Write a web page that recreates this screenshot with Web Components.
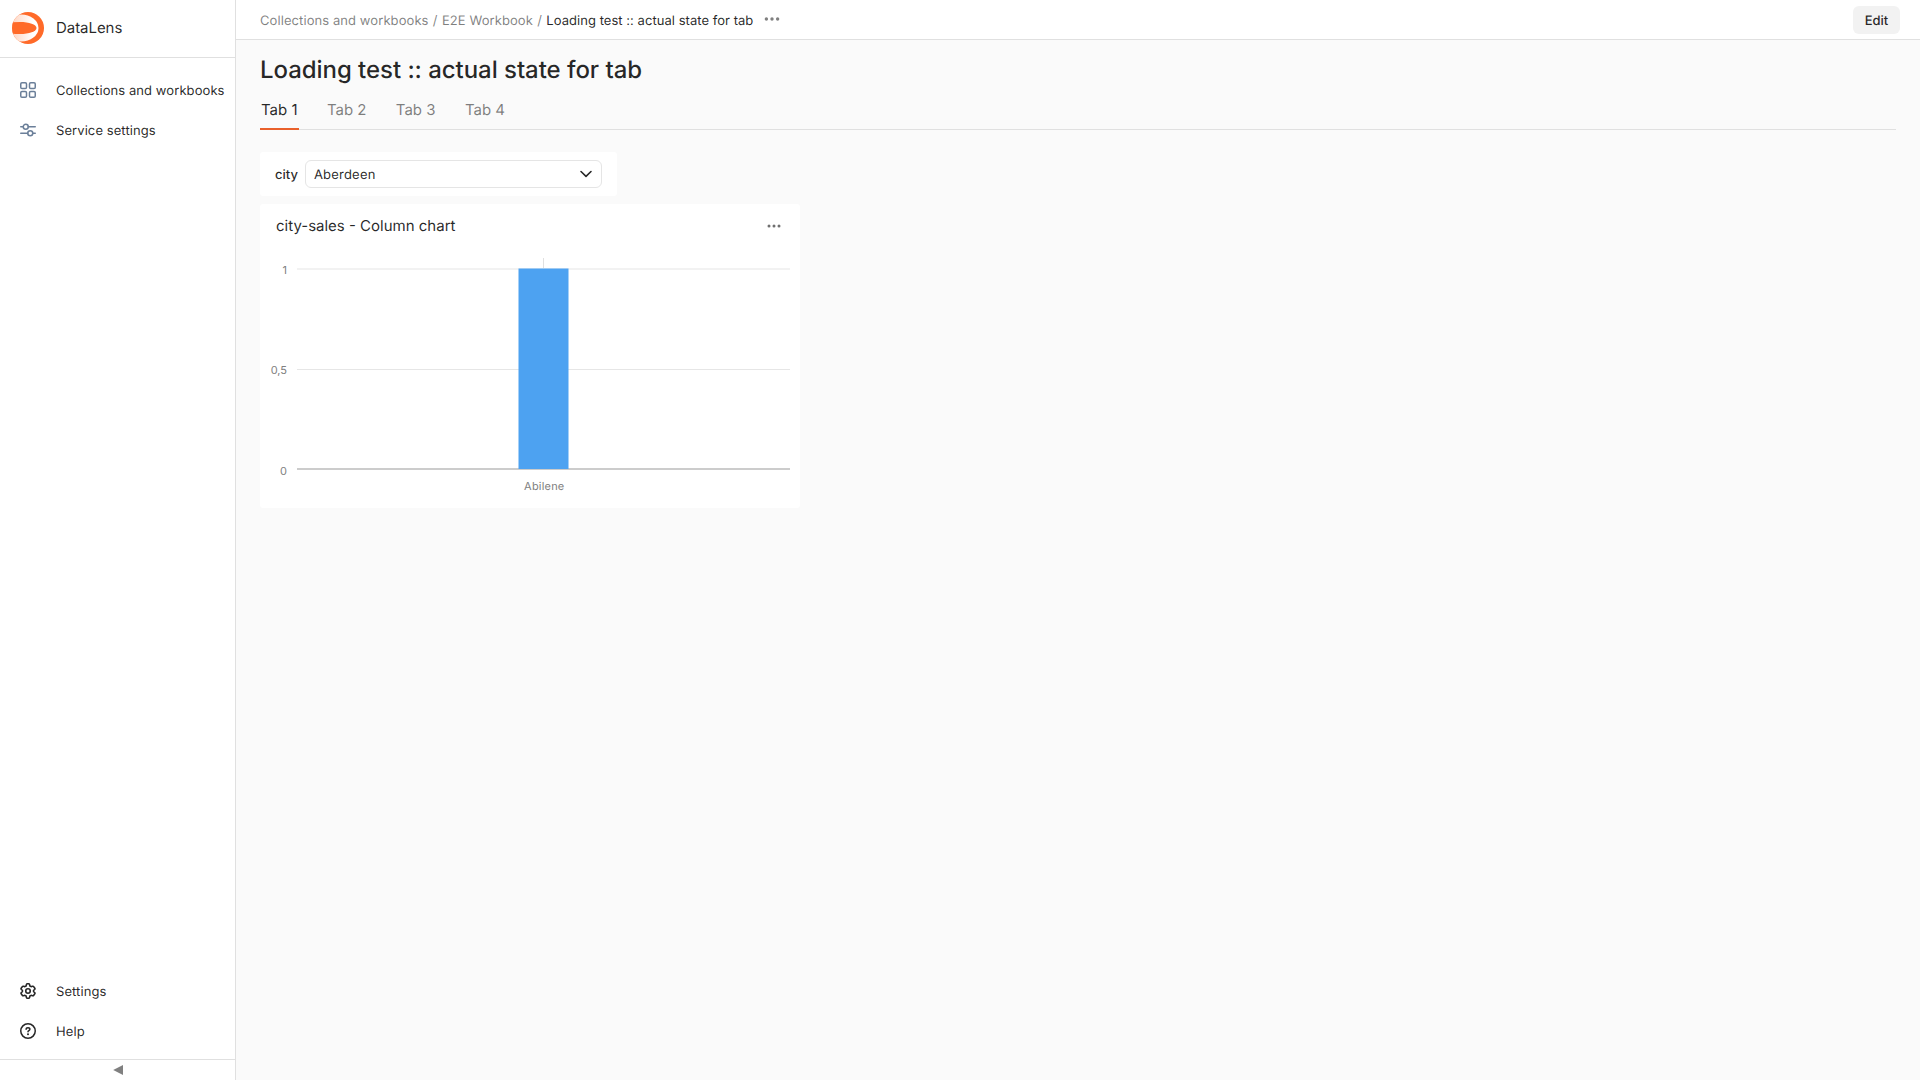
<!DOCTYPE html>
<html lang="en">
<head>
<meta charset="utf-8">
<title>Loading test :: actual state for tab</title>
<style>
html,body{margin:0;height:100%}
body{font-family:Inter,"Liberation Sans",sans-serif;font-size:13px;line-height:18px;color:rgba(0,0,0,.85);background:#fafafa;overflow:hidden;text-rendering:geometricPrecision}
</style>
</head>
<body>
<dl-app></dl-app>
<script>
function define(name, html, init){
  customElements.define(name, class extends HTMLElement{
    constructor(){
      super();
      const t=document.createElement('template');
      t.innerHTML=html;
      this.attachShadow({mode:'open'}).append(t.content.cloneNode(true));
    }
    connectedCallback(){ if(init) init(this,this.shadowRoot); }
  });
}
const icons={
  cells:'<g fill="none" stroke="currentColor" stroke-width="1.5"><rect x=".75" y=".75" width="5.75" height="5.75" rx="1.25"/><rect x="9.5" y=".75" width="5.75" height="5.75" rx="1.25"/><rect x=".75" y="9.5" width="5.75" height="5.75" rx="1.25"/><rect x="9.5" y="9.5" width="5.75" height="5.75" rx="1.25"/></g>',
  sliders:'<g fill="none" stroke="currentColor" stroke-width="1.5" stroke-linecap="round"><path d="M.75 4.75h2.5M8.25 4.75h7M.75 11.25h7M12.75 11.25h2.5"/><circle cx="5.75" cy="4.75" r="2.5"/><circle cx="10.25" cy="11.25" r="2.5"/></g>',
  gear:'<g fill="none" stroke="currentColor" stroke-width="1.6" stroke-linejoin="round"><path d="M6.4 1.65Q6.6.75 7.5.75h1Q9.4.75 9.6 1.65L9.9 2.95 11.1 3.65 12.45 3.25Q13.3 3 13.75 3.75L14.8 5.2Q15.2 5.95 14.6 6.5L13.6 7.3V8.7L14.6 9.5Q15.2 10.05 14.8 10.8L13.75 12.25Q13.3 13 12.45 12.75L11.1 12.35 9.9 13.05 9.6 14.35Q9.4 15.25 8.5 15.25H7.5Q6.6 15.25 6.4 14.35L6.1 13.05 4.9 12.35 3.55 12.75Q2.7 13 2.25 12.25L1.2 10.8Q.8 10.05 1.4 9.5L2.4 8.7V7.3L1.4 6.5Q.8 5.95 1.2 5.2L2.25 3.75Q2.7 3 3.55 3.25L4.9 3.65 6.1 2.95Z"/><circle cx="8" cy="8" r="2.25"/></g>',
  help:'<circle cx="8" cy="8" r="7.25" fill="none" stroke="currentColor" stroke-width="1.5"/><path d="M6.1 6.35C6.1 5.2 7 4.65 8 4.65s1.9.6 1.9 1.6c0 1.25-1.9 1.35-1.9 2.45" fill="none" stroke="currentColor" stroke-width="1.5" stroke-linecap="round"/><circle cx="8" cy="11.2" r="1" fill="currentColor"/>',
  dots:'<g fill="currentColor"><circle cx="3" cy="8" r="1.5"/><circle cx="8" cy="8" r="1.5"/><circle cx="13" cy="8" r="1.5"/></g>',
  chevron:'<path d="M3 5.5 8 10.3 13 5.5" fill="none" stroke="currentColor" stroke-width="1.6" stroke-linecap="round" stroke-linejoin="round"/>',
  collapse:'<path d="M3.2 8 13 3V13Z" fill="currentColor"/>'
};
define('dl-icon','<style>:host{display:block;width:16px;height:16px;flex:none}svg{display:block;width:100%;height:100%}</style><svg viewBox="0 0 16 16"></svg>',(e,r)=>{r.querySelector('svg').innerHTML=icons[e.getAttribute('name')]||''});
define('dl-logo','<style>:host{display:block;width:32px;height:32px}svg{display:block}</style><svg width="32" height="32" viewBox="0 0 32 32"><defs><linearGradient id="g"><stop offset=".3" stop-color="#ffd9c8"/><stop offset=".85" stop-color="#fff"/></linearGradient><clipPath id="c"><circle cx="16" cy="16" r="16"/></clipPath></defs><g clip-path="url(#c)"><path d="M0 0h32v32H0z" fill="#ff6a29"/><ellipse cx="9" cy="16" rx="17.5" ry="13.6" fill="url(#g)"/><path d="M-2 10.500Q3 10 8 10C17 10 24.500 12.500 24.500 16S17 22 8 22Q3 22-2 21.500Z" fill="#ff6a29"/></g></svg>');
define('dl-nav-item','<style>:host{display:flex;align-items:center;height:40px;padding-left:20px;gap:20px;white-space:nowrap;letter-spacing:.08px}span{padding-top:2px}.icon{color:var(--icon,rgba(0,0,0,.85))}</style><div class="icon"></div><span><slot></slot></span>',(e,r)=>{r.querySelector('.icon').innerHTML=`<dl-icon name="${e.getAttribute('icon')}"></dl-icon>`});
define('dl-sidebar',`<style>
:host{display:flex;flex-direction:column;box-sizing:border-box;width:236px;height:100%;background:#fff;border-right:1px solid #e0e0e0}
header{display:flex;align-items:center;gap:12px;height:56px;padding:0 0 1px 12px;border-bottom:1px solid #e0e0e0;font-size:15px;letter-spacing:-.05px}
nav{padding-top:12px;flex:1}.menu{--icon:#6b7f99}
footer{display:flex;justify-content:center;align-items:center;height:20px;border-top:1px solid #e0e0e0;color:#808080}
.bottom{padding-bottom:8px}
</style><header><dl-logo></dl-logo><span>DataLens</span></header>
<nav class="menu"><dl-nav-item icon="cells">Collections and workbooks</dl-nav-item><dl-nav-item icon="sliders">Service settings</dl-nav-item></nav>
<div class="bottom"><dl-nav-item icon="gear">Settings</dl-nav-item><dl-nav-item icon="help">Help</dl-nav-item></div>
<footer><dl-icon name="collapse"></dl-icon></footer>`);
define('dl-topbar',`<style>
:host{display:flex;align-items:center;box-sizing:border-box;height:40px;background:#fff;border-bottom:1px solid #e0e0e0;padding:0 20px 0 24px}
.crumbs{display:flex;gap:4.3px;padding-top:2px;color:rgba(0,0,0,.5);white-space:nowrap;letter-spacing:.08px}b{font-weight:400;color:rgba(0,0,0,.85);letter-spacing:.04px}
dl-icon{width:18px;height:18px;margin:0 0 1px 9.5px;color:#808080}
button{margin-left:auto;width:47px;height:28px;border:0;border-radius:6px;background:#f2f2f2;font:500 13px/18px Inter,sans-serif;color:rgba(0,0,0,.85);padding:2px 0 0;text-rendering:inherit}
</style><div class="crumbs"><span>Collections and workbooks</span><span>/</span><span>E2E Workbook</span><span>/</span><b>Loading test :: actual state for tab</b></div><dl-icon name="dots"></dl-icon><button>Edit</button>`);
define('dl-tab','<style>:host{display:block;box-sizing:border-box;height:38px;padding:8px 1px 0;font-size:15px;line-height:20px;color:rgba(0,0,0,.5)}:host([active]){color:rgba(0,0,0,.85);border-bottom:2px solid #e9602b}</style><slot></slot>');
define('dl-tabs','<style>:host{display:flex;gap:27.4px;height:37px;border-bottom:1px solid #e0e0e0}</style><slot></slot>');
define('dl-card','<style>:host{display:block;box-sizing:border-box;background:#fff;border-radius:3px}</style><slot></slot>');
define('dl-select',`<style>:host{display:flex;align-items:center;height:100%;padding:0 15px;gap:7px}label{font-weight:500;padding-top:2px}span{letter-spacing:.2px;padding-top:2px}
.box{display:flex;flex:1;align-items:center;justify-content:space-between;box-sizing:border-box;height:28px;border:1px solid #e5e5e5;border-radius:6px;padding:0 7px 0 8px}</style><label>city</label><div class="box"><span><slot></slot></span><dl-icon name="chevron"></dl-icon></div>`);
define('dl-chart',`<style>:host{display:block}header{display:flex;justify-content:space-between;align-items:center;height:44px;padding:0 18px 0 16px;font-size:15px}dl-icon{color:#707070}svg{display:block}text{font:11px Inter,sans-serif;fill:#808080}.cat{letter-spacing:.2px}</style>
<header><span><slot></slot></span><dl-icon name="dots"></dl-icon></header>
<svg width="540" height="260" viewBox="0 0 540 260">
<path d="M37 21h493" stroke="#f2f2f2" stroke-width="2"/><path d="M37 121.500h493" stroke="#e6e6e6"/><path d="M37 221h493" stroke="#ccc" stroke-width="2"/><path d="M283.500 10v10" stroke="#e0e0e0"/>
<rect x="258.500" y="20.500" width="50" height="200.500" fill="#4da2f1"/>
<text x="27" y="26" text-anchor="end">1</text><text x="27" y="126" text-anchor="end">0,5</text><text x="27" y="227" text-anchor="end">0</text><text class="cat" x="284.300" y="242" text-anchor="middle">Abilene</text></svg>`);
define('dl-app',`<style>
:host{display:flex;width:100vw;height:100vh}main{flex:1;min-width:0}
.page{padding:11px 24px 0}h1{margin:0;font-size:24px;line-height:38px;font-weight:500;height:41px;letter-spacing:-.05px}
.sel{width:357px;height:44px;margin-top:22px}.chart{width:540px;height:304px;margin-top:8px}
</style><dl-sidebar></dl-sidebar><main><dl-topbar></dl-topbar><div class="page"><h1>Loading test :: actual state for tab</h1>
<dl-tabs><dl-tab active>Tab 1</dl-tab><dl-tab>Tab 2</dl-tab><dl-tab>Tab 3</dl-tab><dl-tab>Tab 4</dl-tab></dl-tabs>
<dl-card class="sel"><dl-select>Aberdeen</dl-select></dl-card><dl-card class="chart"><dl-chart>city-sales - Column chart</dl-chart></dl-card></div></main>`);
</script>
</body>
</html>
